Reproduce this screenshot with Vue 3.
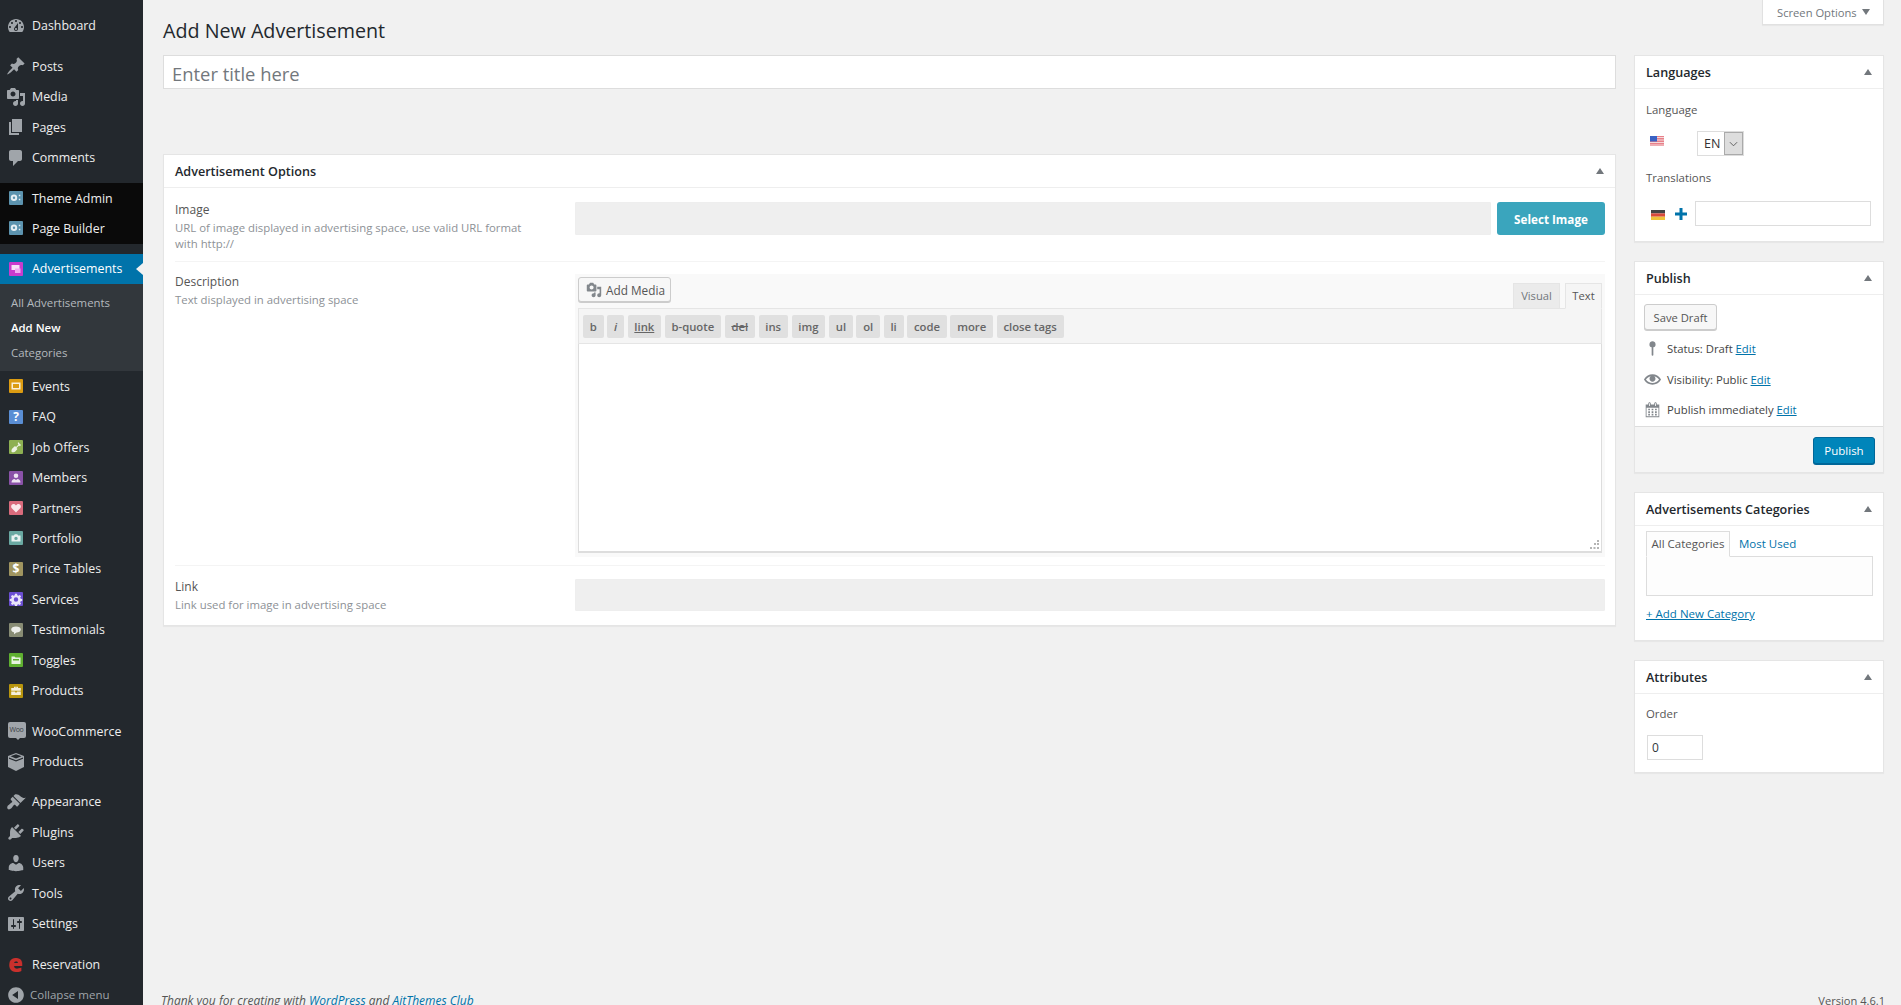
<script setup>
const ic = {
  dashboard: 'M3.76 16h12.48c1.1-1.37 1.76-3.11 1.76-5 0-4.42-3.58-8-8-8s-8 3.58-8 8c0 1.89.66 3.63 1.76 5zM10 4c.55 0 1 .45 1 1s-.45 1-1 1-1-.45-1-1 .45-1 1-1zM6 6c.55 0 1 .45 1 1s-.45 1-1 1-1-.45-1-1 .45-1 1-1zm8 0c.55 0 1 .45 1 1s-.45 1-1 1-1-.45-1-1 .45-1 1-1zm-5.37 5.55L12 7v6c0 1.1-.9 2-2 2s-2-.9-2-2c0-.57.24-1.08.63-1.45zM4 10c.55 0 1 .45 1 1s-.45 1-1 1-1-.45-1-1 .45-1 1-1zm12 0c.55 0 1 .45 1 1s-.45 1-1 1-1-.45-1-1 .45-1 1-1zm-5 3c0-.55-.45-1-1-1s-1 .45-1 1 .45 1 1 1 1-.45 1-1z',
  pin: 'M10.44 3.02l1.82-1.82 6.36 6.35-1.83 1.82c-1.05-.68-2.48-.57-3.41.36l-.75.75c-.92.93-1.04 2.35-.35 3.41l-1.83 1.82-2.41-2.41-2.8 2.79c-.42.42-3.38 2.71-3.8 2.29s1.86-3.39 2.28-3.81l2.79-2.79L4.1 9.36l1.83-1.82c1.05.69 2.48.57 3.4-.36l.75-.75c.93-.92 1.05-2.35.36-3.41z',
  media: 'M13 11V4c0-.55-.45-1-1-1h-1.67L9 1H5L3.67 3H2c-.55 0-1 .45-1 1v7c0 .55.45 1 1 1h10c.55 0 1-.45 1-1zM7 4.5c1.38 0 2.5 1.12 2.5 2.5S8.38 9.5 7 9.5 4.5 8.38 4.5 7 5.62 4.5 7 4.5zM14 6h5v10.5c0 1.38-1.12 2.5-2.5 2.5S14 17.88 14 16.5s1.12-2.5 2.5-2.5c.17 0 .34.02.5.05V9h-3V6zm-4 8.05V13h2v3.5c0 1.38-1.12 2.5-2.5 2.5S7 17.88 7 16.5 8.12 14 9.5 14c.17 0 .34.02.5.05z',
  page: 'M6 15V2h10v13H6zm-1 1h8v2H3V5h2v11z',
  comments: 'M5 2h9c1.1 0 2 .9 2 2v7c0 1.1-.9 2-2 2h-2l-5 5v-5H5c-1.1 0-2-.9-2-2V4c0-1.1.9-2 2-2z',
  box: 'M10 1l8 3v11l-8 4-8-4V4zM4.500 4.300L10 6.400l5.500-2.100L10 2.200zM3 5.500v1.200l7 2.800 7-2.800V5.500l-7 2.700z',
  appearance: 'M14.48 11.06L7.41 3.99l1.5-1.5c.5-.56 2.3-.47 3.51.32 1.21.8 1.43 1.28 2.91 2.1 1.18.64 2.45 1.26 4.45.85zm-.71.71L6.7 4.7 4.93 6.47c-.39.39-.39 1.02 0 1.41l1.06 1.06c.39.39.39 1.03 0 1.42-.6.6-1.43 1.11-2.21 1.69-.35.26-.7.53-1.01.84C1.43 13.23.91 15.43 1.4 16.6c.48 1.18 2.62 1.05 3.97-.31.31-.31.58-.66.84-1.01.58-.78 1.09-1.61 1.69-2.21.39-.39 1.02-.39 1.41 0l1.06 1.06c.39.39 1.02.39 1.41 0z',
  plugins: 'M13.11 4.36L9.87 7.6 8 5.73l3.24-3.24c.35-.34 1.05-.2 1.56.32.52.51.66 1.21.31 1.55zm-8 1.77l.91-1.12 9.01 9.01-1.19.84c-.71.71-2.63 1.16-3.82 1.16H6.14L4.9 17.26c-.59.59-1.54.59-2.12 0-.59-.58-.59-1.53 0-2.12l1.24-1.24v-3.88c0-1.13.4-3.19 1.09-3.89zm7.26 3.97l3.24-3.24c.34-.35 1.04-.21 1.55.31.52.51.66 1.21.31 1.55l-3.24 3.25z',
  users: 'M10 9.25c-2.27 0-2.73-3.44-2.73-3.44C7 4.02 7.82 2 9.97 2c2.16 0 2.98 2.02 2.71 3.81 0 0-.41 3.44-2.68 3.44zm0 2.57L12.72 10c2.39 0 4.52 2.33 4.52 4.53v2.49s-3.65 1.13-7.24 1.13c-3.65 0-7.24-1.13-7.24-1.13v-2.49c0-2.25 1.94-4.48 4.47-4.48z',
  tools: 'M16.68 9.77c-1.34 1.34-3.3 1.67-4.95.99l-5.41 6.52c-.99.99-2.59.99-3.58 0s-.99-2.59 0-3.57l6.52-5.42c-.68-1.65-.35-3.61.99-4.95 1.28-1.28 3.12-1.62 4.72-1.06l-2.89 2.89 2.82 2.82 2.86-2.87c.53 1.58.18 3.39-1.08 4.65zM3.81 16.21c.4.39 1.04.39 1.43 0 .4-.4.4-1.04 0-1.43-.39-.4-1.03-.4-1.43 0-.39.39-.39 1.03 0 1.43z',
  settings: 'M18 16V4c0-.55-.45-1-1-1H3c-.55 0-1 .45-1 1v12c0 .55.45 1 1 1h14c.55 0 1-.45 1-1zM8 11h1c.55 0 1 .45 1 1s-.45 1-1 1H8v1.5c0 .28-.22.5-.5.5s-.5-.22-.5-.5V13H6c-.55 0-1-.45-1-1s.45-1 1-1h1V5.5c0-.28.22-.5.5-.5s.5.22.5.5V11zm5-2h-1c-.55 0-1-.45-1-1s.45-1 1-1h1V5.5c0-.28.22-.5.5-.5s.5.22.5.5V7h1c.55 0 1 .45 1 1s-.45 1-1 1h-1v5.5c0 .28-.22.5-.5.5s-.5-.22-.5-.5V9z',
  collapse: 'M10 2.16c4.33 0 7.84 3.51 7.84 7.84s-3.51 7.84-7.84 7.84S2.16 14.33 2.16 10 5.71 2.16 10 2.16zm2 11.72V6.12L6.18 9.97z',
  eye: 'M19.7 9.4C17.7 6 14 3.9 10 3.9S2.3 6 .3 9.4L0 10l.3.6c2 3.4 5.7 5.5 9.7 5.5s7.7-2.1 9.7-5.5l.3-.6-.3-.6zM10 14.1c-3.1 0-6-1.6-7.7-4.1C3.6 8 5.7 6.6 8 6.1c-.9.6-1.5 1.7-1.5 2.9 0 1.9 1.6 3.5 3.5 3.5s3.5-1.6 3.5-3.5c0-1.2-.6-2.3-1.5-2.9 2.3.5 4.4 1.9 5.7 3.9-1.7 2.5-4.6 4.1-7.7 4.1z',
  calendar: 'M15 4h3v15H2V4h3V3c0-.41.15-.76.44-1.06.29-.29.65-.44 1.06-.44s.77.15 1.06.44c.29.3.44.65.44 1.06v1h4V3c0-.41.15-.76.44-1.06.29-.29.65-.44 1.06-.44s.77.15 1.06.44c.29.3.44.65.44 1.06v1zM6 3v2.5c0 .14.05.26.15.36.09.09.21.14.35.14s.26-.05.35-.14c.1-.1.15-.22.15-.36V3c0-.14-.05-.26-.15-.35-.09-.1-.21-.15-.35-.15s-.26.05-.35.15c-.1.09-.15.21-.15.35zm7 0v2.5c0 .14.05.26.14.36.1.09.22.14.36.14s.26-.05.36-.14c.09-.1.14-.22.14-.36V3c0-.14-.05-.26-.14-.35-.1-.1-.22-.15-.36-.15s-.26.05-.36.15c-.09.09-.14.21-.14.35zm4 15V8H3v10h14zM7 9v2H5V9h2zm2 0h2v2H9V9zm4 2V9h2v2h-2zm-6 1v2H5v-2h2zm2 0h2v2H9v-2zm4 2v-2h2v2h-2zm-6 1v2H5v-2h2zm4 2H9v-2h2v2zm4 0h-2v-2h2v2z',
  mapPin: 'M10 1.500a3.600 3.600 0 0 1 1 7.060V17.500c0 .6-.45 1-1 1s-1-.4-1-1V8.560A3.600 3.600 0 0 1 10 1.500z'
}
const sq = {
  admin: 'M5 3.500a3.200 3.200 0 1 0 0 6.400 3.200 3.200 0 0 0 0-6.400zm0 2a1.200 1.200 0 1 1 0 2.400 1.200 1.200 0 0 1 0-2.400zM9.800 3.800h1.500v1.500H9.800zM9.800 7.800h1.500v1.500H9.800z',
  events: 'M2.500 3.500h9v7h-9zM4 5v4h6V5z',
  job: 'M9 2l3 3-1.200 1.200-.8-.8-2.500 2.500 1 1-2.500 2.800c-1.300.8-3 .8-3.200.3-.5-.2-.5-2 .3-3.200L6 6l1 1 2.500-2.500-.7-.8z',
  members: 'M7 2.500a2.300 2.300 0 1 1 0 4.600 2.300 2.300 0 0 1 0-4.600zM2.500 11.500c0-2 1.500-3.500 3-3.500L7 9l1.500-1c1.500 0 3 1.500 3 3.500z',
  heart: 'M7 11.500L2.800 7.200C1.300 5.500 2.500 3 4.500 3 5.600 3 6.500 3.700 7 4.500 7.500 3.700 8.400 3 9.500 3c2 0 3.200 2.500 1.700 4.200z',
  camera: 'M2.500 4.500h2.300l1-1.300h2.400l1 1.300h2.300v6h-9zM7 5.700a1.700 1.700 0 1 0 0 3.400 1.700 1.700 0 0 0 0-3.400z',
  gear: 'M6 1.800h2l.3 1.500 1.100.5 1.300-.9 1.400 1.400-.9 1.300.5 1.100 1.500.3v2l-1.500.3-.5 1.100.9 1.300-1.400 1.400-1.300-.9-1.100.5-.3 1.500H6l-.3-1.500-1.100-.5-1.300.9-1.400-1.400.9-1.300-.5-1.100-1.500-.3v-2l1.500-.3.5-1.100-.9-1.300 1.400-1.400 1.300.9 1.100-.5zM7 5.300a2.200 2.200 0 1 0 0 4.400 2.200 2.200 0 0 0 0-4.400z',
  bubble: 'M7 3.500c2.800 0 4.800 1.200 4.800 3s-2 3-4.300 3L5 11.200V9.300C3.300 9 2.200 7.900 2.200 6.500c0-1.800 2-3 4.800-3z',
  toggle: 'M2.500 3.500h3l1 1h5v6.500h-9zM4 6v1.500h6V6z',
  case: 'M5 4V2.800h4V4h2.800v2.800H2.200V4zM6 3.700V4h2v-.3zM2.200 7.500h4v1h1.600v-1h4V11H2.200z'
}
const groups = [
  [{ t: 'Dashboard', i: ic.dashboard }],
  [{ t: 'Posts', i: ic.pin }, { t: 'Media', i: ic.media }, { t: 'Pages', i: ic.page }, { t: 'Comments', i: ic.comments }]
]
const themeItems = [
  { t: 'Theme Admin', c: '#5c93ae', s: sq.admin },
  { t: 'Page Builder', c: '#5c93ae', s: sq.admin }
]
const contentItems = [
  { t: 'Events', c: '#dc9c12', s: sq.events },
  { t: 'FAQ', c: '#5a8ed4', g: '?' },
  { t: 'Job Offers', c: '#8eb052', s: sq.job },
  { t: 'Members', c: '#8a52a8', s: sq.members },
  { t: 'Partners', c: '#d96b7c', s: sq.heart },
  { t: 'Portfolio', c: '#6aa9a2', s: sq.camera },
  { t: 'Price Tables', c: '#a09560', g: '$' },
  { t: 'Services', c: '#6b4fd2', s: sq.gear },
  { t: 'Testimonials', c: '#888c74', s: sq.bubble },
  { t: 'Toggles', c: '#5fb030', s: sq.toggle },
  { t: 'Products', c: '#b8950e', s: sq.case }
]
const tail = [
  { t: 'Appearance', i: ic.appearance }, { t: 'Plugins', i: ic.plugins }, { t: 'Users', i: ic.users },
  { t: 'Tools', i: ic.tools }, { t: 'Settings', i: ic.settings }
]
const tags = ['b', 'i', 'link', 'b-quote', 'del', 'ins', 'img', 'ul', 'ol', 'li', 'code', 'more', 'close tags']
</script>

<template>
  <div class="page">
    <aside class="side">
      <div v-for="(g, n) in groups" :key="n" class="grp">
        <div v-for="m in g" :key="m.t" class="mi">
          <svg class="mic" viewBox="0 0 20 20"><path :d="m.i" /></svg>{{ m.t }}
        </div>
      </div>
      <div class="grp dark">
        <div v-for="m in themeItems" :key="m.t" class="mi">
          <span class="sq" :style="{ background: m.c }"><svg viewBox="0 0 14 14"><path fill-rule="evenodd" :d="m.s" /></svg></span>{{ m.t }}
        </div>
      </div>
      <div class="grp">
        <div class="mi cur">
          <span class="sq ads"><svg viewBox="0 0 14 14"><path d="M2.500 3h8v5h-8z" /><path class="adin" d="M6 6.500h5.500V11H6z" /></svg></span>Advertisements
        </div>
        <div class="sub">
          <div class="si">All Advertisements</div>
          <div class="si on">Add New</div>
          <div class="si">Categories</div>
        </div>
        <div v-for="m in contentItems" :key="m.t" class="mi">
          <span class="sq" :style="{ background: m.c }">
            <b v-if="m.g">{{ m.g }}</b>
            <svg v-else viewBox="0 0 14 14"><path fill-rule="evenodd" :d="m.s" /></svg>
          </span>{{ m.t }}
        </div>
      </div>
      <div class="grp">
        <div class="mi">
          <span class="woo">Woo</span>WooCommerce
        </div>
        <div class="mi">
          <svg class="mic big" viewBox="0 0 20 20"><path fill-rule="evenodd" :d="ic.box" /></svg>Products
        </div>
      </div>
      <div class="grp">
        <div v-for="m in tail" :key="m.t" class="mi">
          <svg class="mic" viewBox="0 0 20 20"><path :d="m.i" /></svg>{{ m.t }}
        </div>
      </div>
      <div class="grp">
        <div class="mi"><span class="eres">e</span>Reservation</div>
        <div class="mi col">
          <svg class="mic" viewBox="0 0 20 20"><path :d="ic.collapse" /></svg>Collapse menu
        </div>
      </div>
    </aside>

    <main class="main">
      <div class="so">Screen Options<i class="tri-d"></i></div>
      <h1>Add New Advertisement</h1>
      <div class="cols">
        <div class="left">
          <input class="title" placeholder="Enter title here" />
          <section class="box opts">
            <header class="bh"><span>Advertisement Options</span><i class="tri-u"></i></header>
            <div class="row r1">
              <div class="lab"><div class="ln">Image</div><p>URL of image displayed in advertising space, use valid URL format<br />with http://</p></div>
              <div class="fld">
                <input class="dis" />
                <button class="sel">Select Image</button>
              </div>
            </div>
            <div class="row r2">
              <div class="lab"><div class="ln">Description</div><p>Text displayed in advertising space</p></div>
              <div class="ed">
                <div class="edh">
                  <button class="am"><svg viewBox="0 0 20 20"><path :d="ic.media" /></svg>Add Media</button>
                  <div class="tabs"><span class="tb">Visual</span><span class="tb act">Text</span></div>
                </div>
                <div class="tools">
                  <span v-for="t in tags" :key="t" class="tag" :class="'t-' + t.replace(' ', '')">{{ t }}</span>
                </div>
                <div class="ta">
                  <textarea></textarea>
                  <svg class="grip" viewBox="0 0 9 9"><path d="M7 0h2v2H7zM4 3h2v2H4zM7 3h2v2H7zM0 7h2v2H0zM3.500 7h2v2h-2zM7 7h2v2H7z" /></svg>
                </div>
              </div>
            </div>
            <div class="row r3">
              <div class="lab"><div class="ln">Link</div><p>Link used for image in advertising space</p></div>
              <input class="dis wide" />
            </div>
          </section>
        </div>

        <div class="right">
          <section class="box">
            <header class="bh"><span>Languages</span><i class="tri-u"></i></header>
            <div class="bb lang">
              <div class="h">Language</div>
              <div class="lrow">
                <svg class="flag" viewBox="0 0 14 10">
                  <rect width="14" height="10" fill="#e8808a" />
                  <path d="M0 1.500h14M0 4h14M0 6.500h14M0 9h14" stroke="#f4dada" stroke-width="1" />
                  <rect width="7" height="5.500" fill="#3a62c4" />
                </svg>
                <div class="select"><span>EN</span><span class="chev"><svg viewBox="0 0 10 6"><path d="M1 1l4 4 4-4" fill="none" stroke="#555" stroke-width="1" /></svg></span></div>
              </div>
              <div class="h tr">Translations</div>
              <div class="trow">
                <svg class="flag de" viewBox="0 0 14 10">
                  <rect width="14" height="3.400" fill="#444" />
                  <rect y="3.400" width="14" height="3.300" fill="#d84a3c" />
                  <rect y="6.700" width="14" height="3.300" fill="#eec23a" />
                </svg>
                <svg class="plus" viewBox="0 0 12 12"><path d="M6 0v12M0 6h12" stroke="#0073aa" stroke-width="3" /></svg>
                <input class="tin" />
              </div>
            </div>
          </section>

          <section class="box">
            <header class="bh"><span>Publish</span><i class="tri-u"></i></header>
            <div class="bb pub">
              <button class="sd">Save Draft</button>
              <div class="mrow r-st"><svg viewBox="0 0 20 20"><path :d="ic.mapPin" /></svg>Status: Draft <a>Edit</a></div>
              <div class="mrow r-vi"><svg viewBox="0 0 20 20"><path :d="ic.eye" /></svg>Visibility: Public <a>Edit</a></div>
              <div class="mrow r-pu"><svg viewBox="0 0 20 20"><path :d="ic.calendar" /></svg>Publish immediately <a>Edit</a></div>
            </div>
            <div class="pf"><button class="pb">Publish</button></div>
          </section>

          <section class="box">
            <header class="bh"><span>Advertisements Categories</span><i class="tri-u"></i></header>
            <div class="bb cats">
              <div class="ctabs"><span class="ct">All Categories</span><span class="mu">Most Used</span></div>
              <div class="cbox"></div>
              <a class="anc">+ Add New Category</a>
            </div>
          </section>

          <section class="box">
            <header class="bh"><span>Attributes</span><i class="tri-u"></i></header>
            <div class="bb attrs">
              <div class="h">Order</div>
              <input class="ord" value="0" />
            </div>
          </section>
        </div>
      </div>
      <footer class="foot">
        <span>Thank you for creating with <a>WordPress</a> and <a>AitThemes Club</a></span>
        <span class="ver">Version 4.6.1</span>
      </footer>
    </main>
  </div>
</template>

<style>
html, body { margin: 0; background: #f1f1f1; overflow: hidden; }
</style>

<style scoped>
.page { display: flex; width: 1901px; height: 1005px; overflow: hidden; background: #f1f1f1; font-family: "Open Sans", sans-serif; font-size: 12px; color: #444; }
.side { width: 143px; flex: none; background: #23282d; color: #eee; padding-top: 10.600px; box-sizing: border-box; }
.grp { margin-bottom: 10px; }
.grp.dark { background: #0a0a0a; }
.mi { position: relative; height: 30.450px; display: flex; align-items: center; padding-left: 32px; font-size: 12.400px; white-space: nowrap; }
.mic { position: absolute; left: 6px; top: 5.200px; width: 20px; height: 20px; fill: #a0a5aa; }
.sq { position: absolute; left: 9px; top: 8.200px; width: 14px; height: 14px; border-radius: 1px; display: flex; align-items: center; justify-content: center; color: #fff; }
.sq svg { width: 14px; height: 14px; fill: rgba(255, 255, 255, .85); display: block; }
.sq b { font-size: 12px; line-height: 14px; font-weight: 700; }
.sq.ads { background: #c93bcd; }
.adin { fill: #f1a9f3; }
.cur { background: #0073aa; color: #fff; }
.cur::after { content: ""; position: absolute; right: 0; top: 9.500px; border: 6px solid transparent; border-left-width: 0; border-right: 7px solid #f1f1f1; }
.sub { background: #32373c; padding: 5.500px 0 5.300px; }
.si { height: 25.400px; line-height: 25.400px; padding-left: 11px; font-size: 11.400px; color: #b4b9be; }
.si.on { color: #fff; font-weight: 600; }
.woo { position: absolute; left: 7.500px; top: 6px; width: 18px; height: 16px; background: #a0a5aa; border-radius: 2px; color: #3a3f44; font-size: 7px; line-height: 15px; text-align: center; letter-spacing: -.3px; }
.woo::after { content: ""; position: absolute; left: 8px; bottom: -2px; border: 2px solid transparent; border-top-color: #a0a5aa; border-bottom: 0; }
.eres { position: absolute; left: 8px; top: -1px; color: #c9302c; font-size: 24px; line-height: 30px; font-weight: 800; }
.col { color: #a0a5aa; font-size: 11.500px; padding-left: 30px; }

.main { position: relative; flex: 1; min-width: 0; padding: 0 17px 0 20px; display: flex; flex-direction: column; }
.so { position: absolute; right: 17px; top: 0; width: 122px; height: 25px; box-sizing: border-box; background: #fff; border: 1px solid #e1e1e1; border-top: 0; box-shadow: 0 1px 1px rgba(0, 0, 0, .04); font-size: 11.200px; line-height: 25px; color: #72777c; padding-left: 14px; }
.tri-d { position: absolute; right: 13px; top: 9px; border: 4px solid transparent; border-top: 6px solid #72777c; border-bottom: 0; }
h1 { margin: 0; padding-top: 15px; height: 55px; box-sizing: border-box; font-size: 19.700px; line-height: 32px; font-weight: 400; color: #23282d; }
.cols { display: flex; gap: 18px; align-items: flex-start; }
.left { width: 1453px; flex: none; }
.right { width: 250px; flex: none; display: flex; flex-direction: column; gap: 19px; }
input, textarea, button { font-family: inherit; box-sizing: border-box; margin: 0; outline: none; }
.title { display: block; width: 100%; height: 34px; border: 1px solid #ddd; background: #fff; padding: 3px 8px 0; font-size: 18.400px; color: #444; }
.title::placeholder { color: #72777c; opacity: 1; }
.box { background: #fff; border: 1px solid #e5e5e5; box-shadow: 0 1px 1px rgba(0, 0, 0, .04); }
.opts { margin-top: 65px; height: 472px; box-sizing: border-box; }
.bh { height: 33px; box-sizing: border-box; border-bottom: 1px solid #eee; display: flex; align-items: center; justify-content: space-between; padding: 0 11px; font-size: 12.600px; font-weight: 600; color: #23282d; }
.tri-u { border: 4px solid transparent; border-bottom: 6px solid #72777c; border-top: 0; }
.row { display: flex; margin: 0 10px 0 11px; border-bottom: 1px solid #f4f4f4; }
.lab { width: 400px; flex: none; }
.ln { font-size: 12px; line-height: 20px; color: #555; }
.lab p { margin: 0; font-size: 11.360px; line-height: 16px; color: #8d9196; }
.r1 { height: 74px; box-sizing: border-box; padding-top: 14px; }
.r1 .lab { margin-top: -2px; }
.fld { flex: 1; display: flex; gap: 6px; align-items: flex-start; }
.dis { height: 33px; background: #efefef; border: 1px solid #eeeeee; border-radius: 1px; flex: 1; min-width: 0; }
.sel { width: 108px; height: 33px; border: 0; border-radius: 3px; background: #3aa5bd; color: #fff; font-size: 11.700px; font-weight: 700; flex: none; }
.r2 { height: 304px; box-sizing: border-box; padding-top: 12px; }
.r2 .lab { margin-top: -2.300px; }
.ed { flex: 1; height: 283px; background: #f9f9f9; padding: 0 3px; box-sizing: border-box; }
.edh { height: 34px; position: relative; display: flex; justify-content: space-between; }
.am { margin-top: 3px; height: 25px; width: 92.500px; display: flex; align-items: center; gap: 4px; padding: 0 0 0 7px; background: #f7f7f7; border: 1px solid #ccc; border-radius: 3px; box-shadow: 0 1px 0 #ccc; font-size: 11.800px; color: #555; white-space: nowrap; }
.am svg { width: 16px; height: 16px; fill: #82878c; flex: none; }
.tabs { display: flex; gap: 5px; align-items: flex-end; margin-bottom: -1px; position: relative; }
.tb { height: 26px; box-sizing: border-box; padding: 0 7px; border: 1px solid #e5e5e5; background: #ebebeb; font-size: 11.200px; line-height: 24px; color: #72777c; width: 47px; text-align: center; }
.tb.act { width: 37px; padding: 0; background: #f5f5f5; border-bottom-color: #f5f5f5; color: #555; }
.tools { height: 36px; box-sizing: border-box; background: #f5f5f5; border: 1px solid #e5e5e5; display: flex; align-items: center; gap: 3.600px; padding: 0 4px; }
.tag { height: 23px; background: #e0e0e0; border-radius: 2px; font-size: 11.300px; line-height: 23px; font-weight: 600; color: #666; padding: 0 6.800px; }
.t-i { font-style: italic; }
.t-link { text-decoration: underline; }
.t-del { text-decoration: line-through; }
.ta { position: relative; height: 209px; }
.ta textarea { display: block; width: 100%; height: 100%; border: 1px solid #ddd; border-top: 0; border-bottom: 2px solid #ddd; background: #fff; resize: none; }
.grip { position: absolute; right: 3px; bottom: 4px; width: 9px; height: 9px; fill: #b4b4b4; }
.r3 { border: 0; padding-top: 13px; }
.r3 .lab { margin-top: -2.300px; }
.wide { height: 32px; }

.bb { padding: 0 11px; }
.h { font-size: 11.400px; color: #555; }
.lang { height: 152px; box-sizing: border-box; padding-top: 12px; }
.lang .h { line-height: 18px; }
.lrow { display: flex; align-items: flex-start; height: 25px; margin-top: 12px; position: relative; }
.flag { width: 14px; height: 10px; margin: 5px 0 0 4px; flex: none; }
.select { margin-left: 33px; width: 47px; height: 25px; box-sizing: border-box; border: 1px solid #ddd; display: flex; font-size: 12.500px; line-height: 23px; color: #333; padding-left: 6px; justify-content: space-between; }
.chev { width: 17px; background: #ddd; border: 1px solid #aaa; display: flex; align-items: center; justify-content: center; }
.chev svg { width: 9px; height: 6px; }
.tr { margin-top: 13px; }
.trow { display: flex; align-items: center; margin-top: 14px; height: 25px; }
.flag.de { margin: 3px 0 0 5px; box-shadow: 0 0 0 1px rgba(120, 120, 120, .25) inset; }
.plus { width: 12px; height: 12px; margin: 0 8px 0 10px; flex: none; }
.tin { width: 176px; height: 25px; border: 1px solid #ddd; background: #fff; }
.pub { padding: 9px 9px 0; height: 131px; box-sizing: border-box; }
.sd { width: 73px; height: 26px; background: #f7f7f7; border: 1px solid #ccc; border-radius: 3px; box-shadow: 0 1px 0 #ccc; font-size: 11.200px; color: #555; padding: 0; display: block; }
.mrow { font-size: 11.300px; line-height: 18px; color: #444; height: 18px; position: relative; padding-left: 23px; white-space: pre; }
.mrow svg { position: absolute; left: 0; top: 0; width: 17px; height: 17px; fill: #82878c; }
.mrow a, .anc { color: #0073aa; text-decoration: underline; }
.r-st { margin-top: 9.500px; }
.r-vi { margin-top: 13px; }
.r-pu { margin-top: 12.500px; }
.pf { height: 46px; box-sizing: border-box; border-top: 1px solid #ddd; background: #f5f5f5; padding: 10px 8px 0 0; display: flex; justify-content: flex-end; }
.pb { width: 62px; height: 27px; border: 1px solid #006799; border-radius: 3px; background: #0085ba; color: #fff; font-size: 11.500px; padding: 0; box-shadow: 0 1px 0 #006799; }
.cats { height: 114px; box-sizing: border-box; padding-top: 5px; }
.ctabs { height: 26px; display: flex; align-items: flex-start; position: relative; }
.ct { width: 84px; height: 26px; box-sizing: border-box; border: 1px solid #ddd; border-bottom: 1px solid #fdfdfd; background: #fdfdfd; text-align: center; font-size: 11.500px; line-height: 23px; color: #555; position: relative; z-index: 1; }
.mu { margin-left: 9px; font-size: 11.500px; line-height: 25px; color: #0073aa; }
.cbox { height: 40px; box-sizing: border-box; border: 1px solid #ddd; background: #fdfdfd; margin-top: -1px; width: 227px; }
.anc { display: inline-block; margin-top: 9px; font-size: 11.500px; line-height: 18px; }
.attrs { height: 78px; box-sizing: border-box; padding-top: 11px; }
.attrs .h { line-height: 18px; }
.ord { display: block; margin: 12px 0 0 1px; width: 56px; height: 25px; border: 1px solid #ddd; background: #fff; padding: 0 4px; font-size: 12px; color: #32373c; }
.foot { margin-top: auto; margin-bottom: -5px; margin-left: -2px; margin-right: -1px; display: flex; justify-content: space-between; font-size: 12px; line-height: 18px; font-style: italic; color: #555; }
.foot a { color: #0073aa; }
.ver { font-style: normal; font-size: 11.100px; }
</style>
